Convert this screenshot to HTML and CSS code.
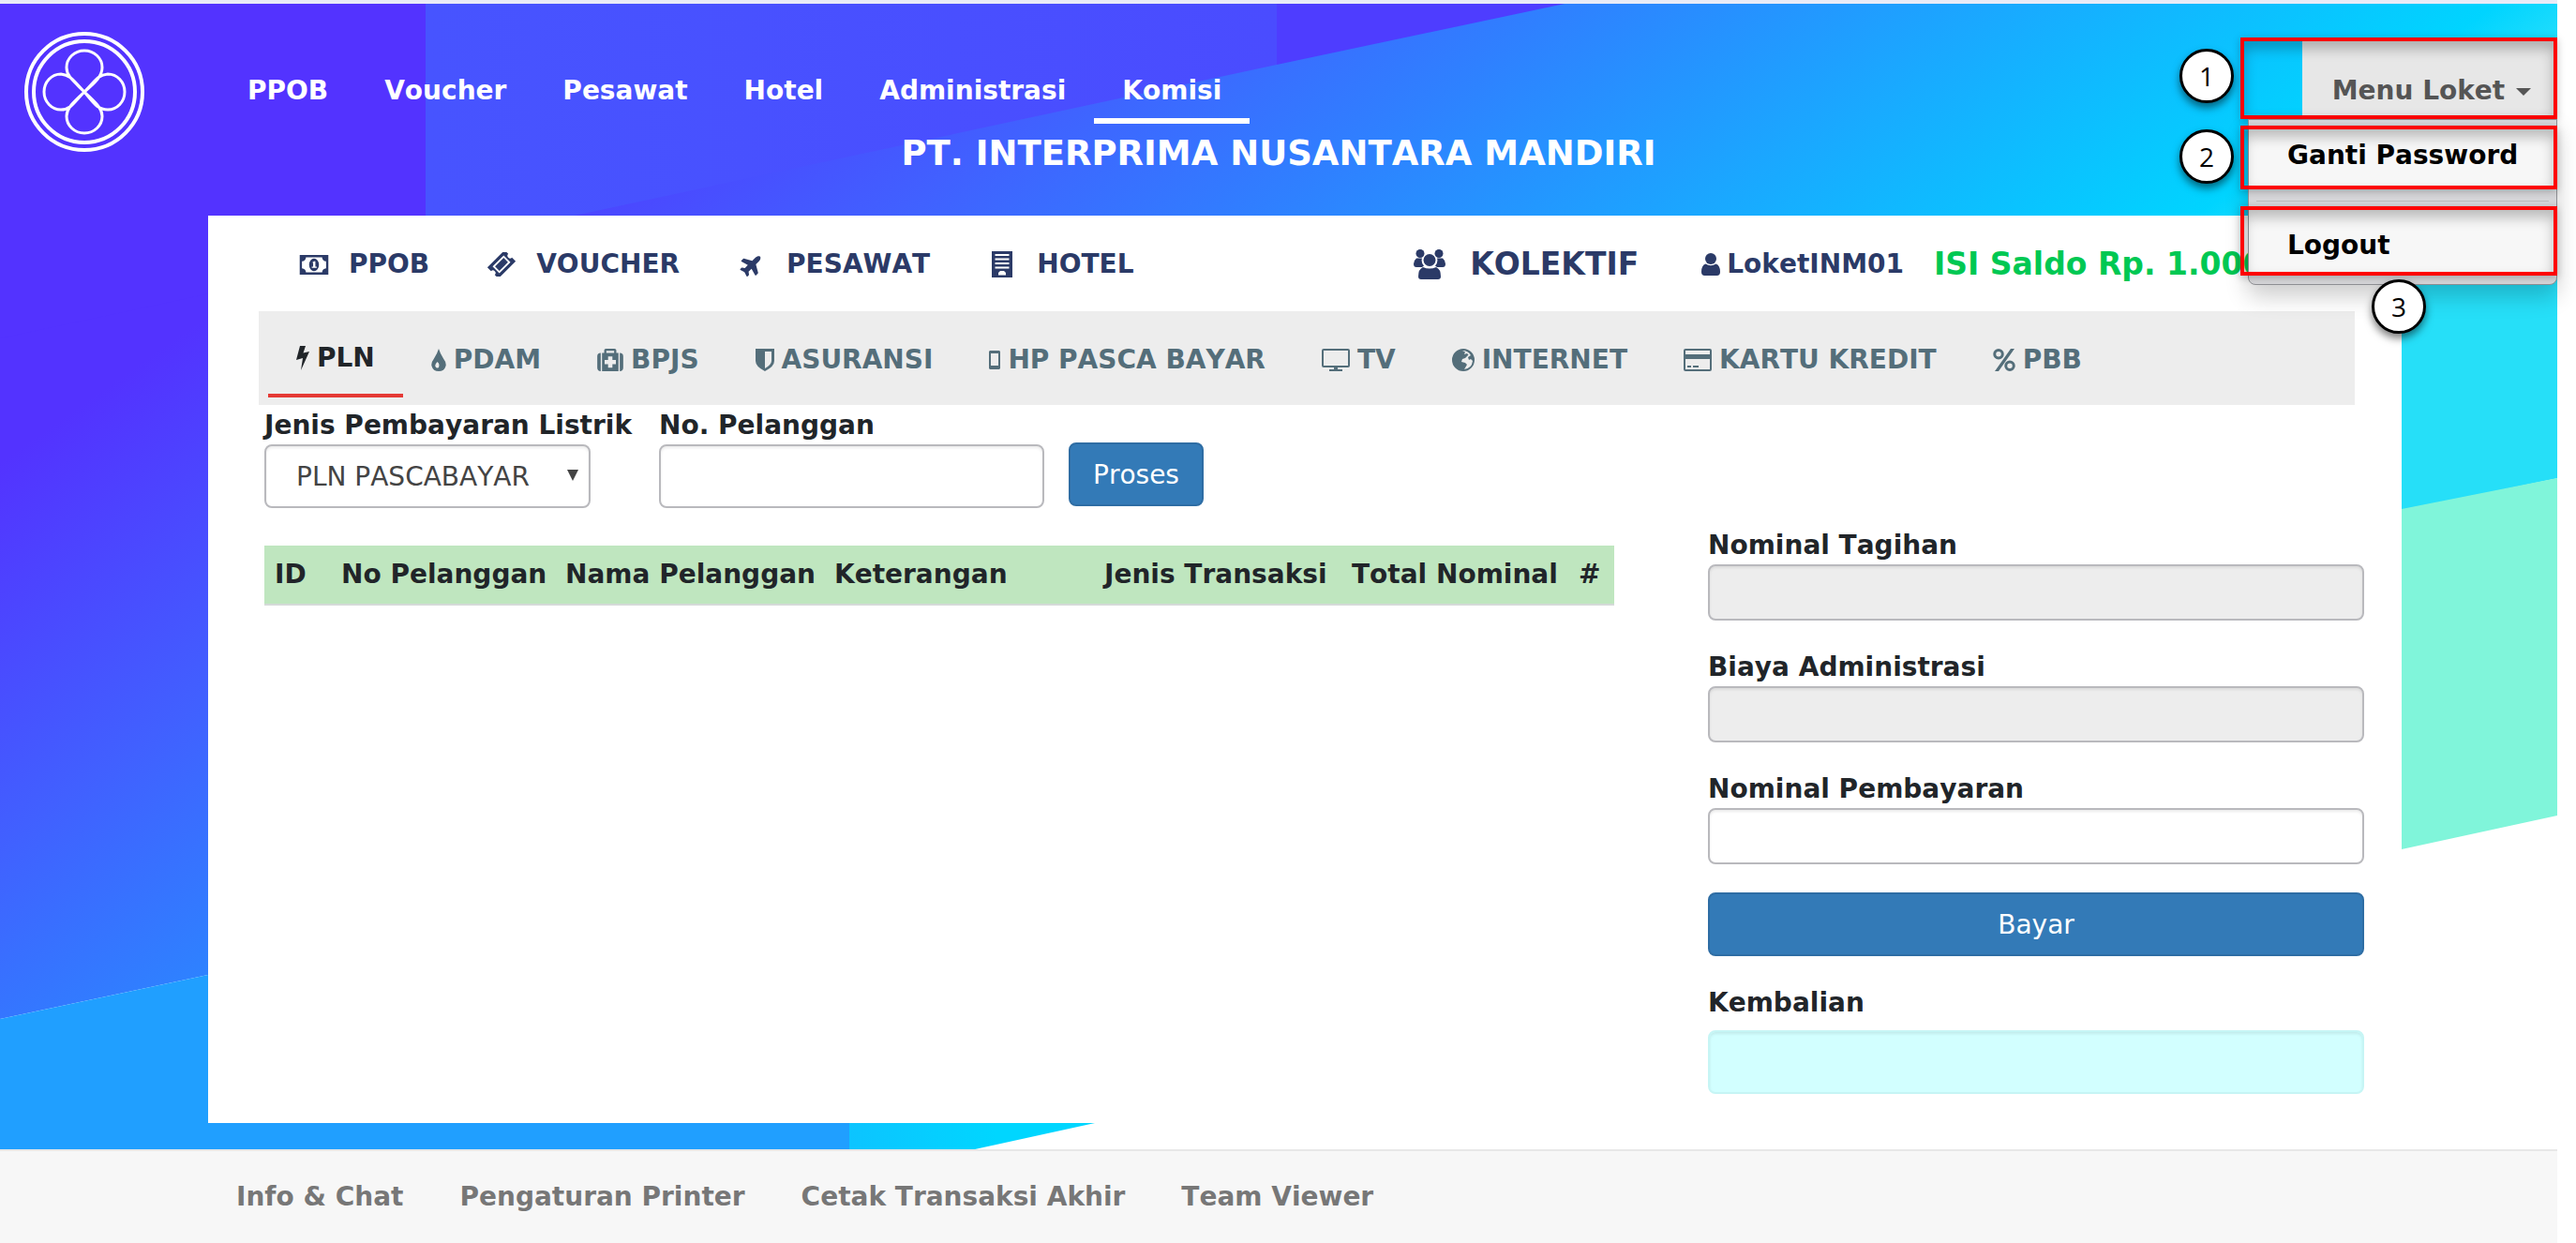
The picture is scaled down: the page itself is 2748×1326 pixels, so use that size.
FILE: index.html
```html
<!DOCTYPE html>
<html lang="id">
<head>
<meta charset="utf-8">
<title>PT. Interprima Nusantara Mandiri</title>
<link rel="stylesheet" href="styles.css">
</head>
<body>
<svg class="sprite" aria-hidden="true">
  <symbol id="i-money" viewBox="0 0 32 22"><path fill-rule="evenodd" d="M0 0h32v22H0zM7 2.500a5 5 0 0 1-4.500 4.500v8a5 5 0 0 1 4.500 4.500h18a5 5 0 0 1 4.500-4.500v-8A5 5 0 0 1 25 2.500zM16 4a5.500 7 0 1 1 0 14a5.500 7 0 0 1 0-14zM14 8.500l2-1.500h1.500v6H19v1.500h-5.500V13H15V9z"/></symbol>
  <symbol id="i-ticket" viewBox="0 0 28 28"><g transform="rotate(-45 14 14)"><path fill-rule="evenodd" d="M0 5h28v6a3 3 0 0 0 0 6v6H0v-6a3 3 0 0 0 0-6zM5 8.500h18v11H5z"/><path d="M7 10.500h14v7H7z"/></g></symbol>
  <symbol id="i-plane" viewBox="0 0 576 576"><path transform="rotate(-45 288 288) translate(0 32)" d="M480 192H365.710L260.610 8.060A16.014 16.014 0 0 0 246.710 0h-65.500c-10.630 0-18.300 10.170-15.380 20.390L214.860 192H112l-43.200-57.600c-3.020-4.030-7.770-6.400-12.800-6.400H16.010C5.600 128-2.040 137.780.49 147.880L32 256 .49 364.120C-2.040 374.220 5.600 384 16.010 384H56c5.040 0 9.780-2.370 12.800-6.400L112 320h102.860l-49.030 171.600c-2.920 10.220 4.750 20.400 15.380 20.400h65.500c5.740 0 11.040-3.080 13.890-8.060L365.710 320H480c35.350 0 96-28.650 96-64s-60.650-64-96-64z"/></symbol>
  <symbol id="i-building" viewBox="0 0 22 28"><path fill-rule="evenodd" d="M0 0h22v28H0zM3.500 3v2h15V3zM3.500 7.500v2h15v-2zM3.500 12v2h15v-2zM3.500 16.500v2h15v-2zM7 25.500h8v-2.500l-2-2H9l-2 2z"/></symbol>
  <symbol id="i-users" viewBox="0 0 34 32"><circle cx="7" cy="4.500" r="4.500"/><circle cx="27" cy="4.500" r="4.500"/><path d="M3 9.500h6a8 8 0 0 0 2 8l-2 1.500H3q-3 0-3-3.500t3-6zM25 9.500h6q3 2.500 3 6t-3 3.500h-6l-2-1.500a8 8 0 0 0 2-8z"/><circle cx="17" cy="11.500" r="6.500"/><path d="M10 19q7 3 14 0q5 2 5 10q0 3-3 3H8q-3 0-3-3q0-8 5-10z"/></symbol>
  <symbol id="i-user" viewBox="0 0 20 24"><circle cx="10" cy="6" r="6"/><path d="M4.500 11.500q5.500 3.500 11 0q4.500 1.500 4.500 8.500q0 4-3.500 4h-13Q0 24 0 20q0-7 4.500-8.500z"/></symbol>
  <symbol id="i-bolt" viewBox="0 0 14 26"><path d="M4 0h6L7.500 7.500 14 6 5 26l2-13-7 2z"/></symbol>
  <symbol id="i-drop" viewBox="0 0 16 24"><path fill-rule="evenodd" d="M8 0q1.500 5 5 10.500q3.500 4.500 2.500 8Q14 24 8 24T.5 18.500q-1-3.500 2.500-8Q6.500 5 8 0zM6.500 14q-3 3-2 5t2.500 1.500t1.500-3T6.500 14z"/></symbol>
  <symbol id="i-medkit" viewBox="0 0 30 26"><path fill-rule="evenodd" d="M8 5V2q0-2 2-2h10q2 0 2 2v3h2.500v21h-19V5zM10.500 5h9V2.500h-9zM12.500 9v4h-4v5h4v4h5v-4h4v-5h-4V9z"/><path d="M4 5v21q-4 0-4-4V9q0-4 4-4zM26 5v21q4 0 4-4V9q0-4-4-4z"/></symbol>
  <symbol id="i-shield" viewBox="0 0 20 24"><path fill-rule="evenodd" d="M0 0h20v13q0 6-10 11Q0 19 0 13zM10 3v18q7-4 7-8V3z"/></symbol>
  <symbol id="i-mobile" viewBox="0 0 12 20"><path fill-rule="evenodd" d="M1 0h10l1 1v18l-1 1H1l-1-1V1zM2 3v13h8V3z"/></symbol>
  <symbol id="i-tv" viewBox="0 0 30 24"><path fill-rule="evenodd" d="M2 0h26q2 0 2 2v16q0 2-2 2H17v2h5v2H8v-2h5v-2H2q-2 0-2-2V2Q0 0 2 0zM2 2v16h26V2z"/></symbol>
  <symbol id="i-globe" viewBox="0 0 24 24"><path fill-rule="evenodd" d="M12 0a12 12 0 1 1 0 24a12 12 0 0 1 0-24zM11 2L14 3.500L13 6L16 5L17.500 6.500L14 10L11 11L10 14L14 15L16 17L13 22Q21 21 22 13L20 11L18 12L17 9L20 7Q17 2 11 2z"/></symbol>
  <symbol id="i-card" viewBox="0 0 30 24"><path fill-rule="evenodd" d="M2 0h26q2 0 2 2v20q0 2-2 2H2q-2 0-2-2V2Q0 0 2 0zM2 2v4h26V2zM2 11v11h26V11zM4 18h4v2H4zM10 18h6v2h-6z"/></symbol>
  <symbol id="i-percent" viewBox="0 0 24 24"><path fill-rule="evenodd" d="M6 0a5.500 5.500 0 1 1 0 11.500A5.500 5.500 0 0 1 6 0zM6 3a2.500 2.500 0 1 0 0 5.500A2.500 2.500 0 0 0 6 3zM18 12.500A5.500 5.500 0 1 1 18 24a5.500 5.500 0 0 1 0-11.500zM18 15.500a2.500 2.500 0 1 0 0 5.500a2.500 2.500 0 0 0 0-5.500zM19 0h4L6 24H2z"/></symbol>
</svg>

<div class="page">
  <svg class="backdrop" viewBox="0 4 2728 1322" preserveAspectRatio="none" aria-hidden="true">
    <defs>
      <linearGradient id="band" gradientUnits="userSpaceOnUse" x1="188" y1="267" x2="922" y2="1309">
        <stop offset=".06" stop-color="#5333ff"/>
        <stop offset=".32" stop-color="#4160ff"/>
        <stop offset=".5" stop-color="#2f80ff"/>
        <stop offset=".71" stop-color="#1aa8ff"/>
        <stop offset=".95" stop-color="#00d4ff"/>
        <stop offset="1" stop-color="#1fdcfc"/>
      </linearGradient>
      <linearGradient id="tip" x1="0" y1="0" x2="1" y2="0">
        <stop offset="0" stop-color="#0cc4ff"/>
        <stop offset=".6" stop-color="#00d6ff"/>
      </linearGradient>
      <linearGradient id="veil" gradientUnits="userSpaceOnUse" x1="454" y1="0" x2="1362" y2="0">
        <stop offset="0" stop-color="#4754ff"/>
        <stop offset="1" stop-color="#4a4cff"/>
      </linearGradient>
    </defs>
    <path fill="url(#band)" d="M0 0H2728V510L0 1087z"/>
    <path fill="#5333ff" d="M0 0H454V264L0 361z"/>
    <path fill="url(#veil)" d="M454 0H1362V69L454 264z"/>
    <path fill="#4e3dff" d="M1362 0H1688L1362 69z"/>
    <path fill="#26dff8" d="M2562 230H2728V510L2562 543z"/>
    <path fill="#209fff" d="M0 1087L906 895V1326H0z"/>
    <path fill="url(#tip)" d="M906 895L1168 840V1198L1040 1226H906z"/>
    <path fill="#80f5da" d="M2562 543L2728 510V870L2562 906z"/>
  </svg>

  <header class="topbar">
    <svg class="logo" viewBox="0 0 128 128" fill="none" stroke="#fff" role="img" aria-label="INM">
      <circle cx="64" cy="64" r="62" stroke-width="4"/>
      <circle cx="64" cy="64" r="54" stroke-width="4"/>
      <path stroke-width="3" d="M64 64C52 52 45 47 45 38a19 18 0 0 1 38 0C83 47 76 54 64 64C52 76 45 81 45 90a19 18 0 0 0 38 0C83 81 76 76 64 64C54 54 50 46 39 45a18 19 0 0 0 0 38C50 83 54 74 64 64C76 52 78 46 89 45a18 19 0 0 1 0 38C78 83 74 76 64 64z"/>
    </svg>
    <nav class="main-nav">
      <a href="#">PPOB</a><a href="#">Voucher</a><a href="#">Pesawat</a><a href="#">Hotel</a><a href="#">Administrasi</a><a href="#" class="current">Komisi</a>
    </nav>
    <div class="account">
      <button class="account-toggle" type="button">Menu Loket <span class="caret"></span></button>
      <span class="mark mark-toggle"></span>
      <span class="step step-1">1</span>
      <div class="account-menu">
        <div class="entry"><a href="#">Ganti Password</a><span class="mark"></span><span class="step step-2">2</span></div>
        <hr>
        <div class="entry"><a class="tall" href="#">Logout</a><span class="mark"></span><span class="step step-3">3</span></div>
      </div>
    </div>
    <h1>PT. INTERPRIMA NUSANTARA MANDIRI</h1>
  </header>

  <main class="card">
    <nav class="services">
      <a href="#"><svg width="34" height="21"><use href="#i-money"/></svg>PPOB</a>
      <a href="#"><svg width="34" height="26"><use href="#i-ticket"/></svg>VOUCHER</a>
      <a href="#"><svg width="34" height="25"><use href="#i-plane"/></svg>PESAWAT</a>
      <a href="#"><svg width="34" height="28"><use href="#i-building"/></svg>HOTEL</a>
      <a href="#" class="collective"><svg width="34" height="32"><use href="#i-users"/></svg>KOLEKTIF</a>
      <a href="#" class="user"><svg width="22" height="24"><use href="#i-user"/></svg>LoketINM01</a>
      <a href="#" class="balance">ISI Saldo Rp. 1.000</a>
    </nav>

    <nav class="tabs">
      <a href="#" class="current"><svg width="14" height="26"><use href="#i-bolt"/></svg>PLN</a>
      <a href="#"><svg width="16" height="24"><use href="#i-drop"/></svg>PDAM</a>
      <a href="#"><svg width="28" height="24"><use href="#i-medkit"/></svg>BPJS</a>
      <a href="#"><svg width="20" height="24"><use href="#i-shield"/></svg>ASURANSI</a>
      <a href="#"><svg width="12" height="20"><use href="#i-mobile"/></svg>HP PASCA BAYAR</a>
      <a href="#"><svg width="30" height="24"><use href="#i-tv"/></svg>TV</a>
      <a href="#"><svg width="24" height="24"><use href="#i-globe"/></svg>INTERNET</a>
      <a href="#"><svg width="30" height="24"><use href="#i-card"/></svg>KARTU KREDIT</a>
      <a href="#"><svg width="24" height="24"><use href="#i-percent"/></svg>PBB</a>
    </nav>

    <div class="workspace">
      <section>
        <form class="lookup">
          <div class="field kind">
            <label for="jenis">Jenis Pembayaran Listrik</label>
            <span class="select"><select id="jenis"><option>PLN PASCABAYAR</option></select></span>
          </div>
          <div class="field customer">
            <label for="pelanggan">No. Pelanggan</label>
            <input id="pelanggan" type="text">
          </div>
          <button class="btn" type="button">Proses</button>
        </form>
        <table>
          <colgroup><col class="c-id"><col class="c-no"><col class="c-name"><col class="c-note"><col class="c-type"><col class="c-total"><col></colgroup>
          <thead><tr><th>ID</th><th>No Pelanggan</th><th>Nama Pelanggan</th><th>Keterangan</th><th>Jenis Transaksi</th><th>Total Nominal</th><th>#</th></tr></thead>
        </table>
      </section>

      <form class="payment">
        <div class="field"><label for="tagihan">Nominal Tagihan</label><input id="tagihan" type="text" disabled></div>
        <div class="field"><label for="biaya">Biaya Administrasi</label><input id="biaya" type="text" disabled></div>
        <div class="field"><label for="bayar">Nominal Pembayaran</label><input id="bayar" type="text"></div>
        <button class="btn" type="button">Bayar</button>
        <div class="field change"><label for="kembalian">Kembalian</label><input id="kembalian" type="text" readonly></div>
      </form>
    </div>
  </main>

  <footer>
    <a href="#">Info &amp; Chat</a><a href="#">Pengaturan Printer</a><a href="#">Cetak Transaksi Akhir</a><a href="#">Team Viewer</a>
  </footer>
</div>
</body>
</html>
```
FILE: styles.css
```css
* { box-sizing: border-box; }

body {
  margin: 0;
  padding-right: 20px;
  background: #fff;
  color: #212529;
  font: bold 28px/36px Verdana, "DejaVu Sans", sans-serif;
}

body, select, button { font-kerning: none; }

a { color: inherit; text-decoration: none; white-space: nowrap; }
svg { flex: none; fill: currentColor; }
.sprite { position: absolute; width: 0; height: 0; }

.page {
  position: relative;
  min-height: 100vh;
  display: flex;
  flex-direction: column;
  border-top: 4px solid #e9ebf7;
}

.backdrop {
  position: absolute;
  inset: 0;
  z-index: -1;
  width: 100%;
  height: 100%;
}

/* Header */
.topbar {
  display: grid;
  grid-template-columns: 234px 1fr auto;
  grid-template-rows: 128px 98px;
  color: #fff;
}
.logo {
  grid-area: 1 / 1 / 3 / 2;
  width: 128px;
  height: 128px;
  margin: 30px 0 0 26px;
  fill: none;
}
.main-nav { display: flex; align-items: flex-end; }
.main-nav a { padding: 0 30px 11px; border-bottom: 6px solid transparent; }
.main-nav .current { border-color: #fff; }
h1 {
  grid-area: 2 / 1 / 3 / 4;
  margin: 10px 0 0;
  font-size: 37px;
  line-height: 44px;
  text-align: center;
}

/* Account menu */
.account { position: relative; align-self: end; display: flex; margin-bottom: 5px; }
.account-toggle {
  height: 87px;
  padding: 26px 28px 0 32px;
  border: 0;
  background: #e7e7e7;
  color: #555;
  font: inherit;
}
.caret {
  display: inline-block;
  margin-left: 2px;
  border: 8px solid transparent;
  border-top-color: #555;
  border-bottom: 0;
  vertical-align: middle;
}
.account-menu {
  position: absolute;
  top: 100%;
  right: 0;
  z-index: 2;
  width: 330px;
  padding: 6px 0 9px;
  border: 1px solid #8f9094;
  border-radius: 0 0 8px 8px;
  background: #d6d6d9;
  box-shadow: 0 12px 24px rgba(0, 0, 0, .2);
  color: #000;
}
.entry { position: relative; }
.entry a { display: block; padding: 14px 41px 18px; background: #f7f7f7; }
.entry .tall { padding: 24px 41px 14px; }
.account-menu hr { height: 1px; margin: 12px 8px 5px; border: 0; background: #bbb; }

/* Numbered callouts */
.mark {
  position: absolute;
  inset: 0 -1px 0 -9px;
  border: 4px solid #f00;
  box-shadow: inset 0 8px 14px rgba(0, 0, 0, .25), 0 2px 8px rgba(0, 0, 0, .25);
  pointer-events: none;
}
.mark-toggle { inset: 0 0 0 -66px; }
.step {
  position: absolute;
  display: grid;
  place-items: center;
  width: 58px;
  height: 58px;
  border: 3px solid #000;
  border-radius: 50%;
  background: #fff;
  box-shadow: 0 5px 8px rgba(0, 0, 0, .5);
  color: #000;
  font: 28px/36px "Open Sans", sans-serif;
}
.step-1 { top: 12px; right: 345px; }
.step-2 { top: 4px; right: 344px; }
.step-3 { top: 78px; right: 139px; }

/* Content card */
.card {
  margin: 0 166px 28px 222px;
  padding: 0 40px 31px 54px;
  background: #fff;
}
.services { display: flex; align-items: center; height: 102px; padding: 2px 123px 0 42px; color: #2b3a67; }
.services a { display: flex; align-items: center; gap: 20px; margin-right: 60px; }
.services .collective { margin-left: auto; margin-right: 66px; gap: 26px; font-size: 33px; }
.services .user { gap: 6px; margin-right: 32px; }
.services .balance { width: 336px; margin-right: 0; color: #00c853; font-size: 33px; }

.tabs { display: flex; height: 100px; margin-right: 10px; padding-left: 10px; background: #ededed; color: #546e7a; }
.tabs a { display: flex; align-items: center; gap: 8px; height: 92px; padding: 16px 30px 0; border-bottom: 4px solid transparent; }
.tabs .current { padding-top: 12px; border-color: #e53935; color: #212529; }

.workspace { display: grid; grid-template-columns: 1440px 1fr; column-gap: 100px; padding-left: 6px; }

/* Forms */
.field { display: flex; flex-direction: column; }
input, select {
  width: 100%;
  border: 2px solid #b9b9bd;
  border-radius: 8px;
  background: #fff;
  box-shadow: inset 0 2px 3px rgba(0, 0, 0, .08);
  color: #444;
  font-size: 28px;
  font-family: Verdana, "DejaVu Sans", sans-serif;
}
input:disabled { background: #ededed; }
.lookup { display: flex; align-items: flex-end; height: 110px; }
.lookup input, select { height: 68px; }
.lookup label { margin-bottom: 2px; white-space: nowrap; }
.kind { width: 348px; margin-right: 73px; }
.customer { width: 411px; margin-right: 26px; }
.select { position: relative; display: block; }
.select::after {
  content: "";
  position: absolute;
  top: 27px;
  right: 13px;
  border: 6px solid transparent;
  border-top: 12px solid #444;
  border-bottom: 0;
}
select { padding: 0 32px; appearance: none; }
.btn {
  height: 68px;
  border: 2px solid #2e6da4;
  border-radius: 8px;
  background: #337ab7;
  color: #fff;
  font-size: 28px;
  font-family: Verdana, "DejaVu Sans", sans-serif;
}
.lookup .btn { width: 144px; margin-bottom: 2px; padding: 0; }

table { width: 100%; margin-top: 40px; table-layout: fixed; border-collapse: collapse; }
thead { background: #bfe6bf; border-bottom: 2px solid #d5dad8; }
th { padding: 13px 0 13px 11px; text-align: left; white-space: nowrap; }
.c-id { width: 71px; }
.c-no { width: 239px; }
.c-name { width: 287px; }
.c-note { width: 288px; }
.c-type { width: 264px; }
.c-total { width: 242px; }

.payment { display: flex; flex-direction: column; padding-top: 132px; }
.payment label { margin-bottom: 2px; }
.payment .field { margin-bottom: 32px; }
.payment .field input { height: 60px; }
.payment .btn { margin-top: -2px; }
.payment .change { margin: 32px 0 0; }
.payment .change label { margin-bottom: 11px; }
.payment .change input { height: 68px; border-color: #c6f5f5; background: #d2ffff; }

footer {
  display: flex;
  align-items: center;
  flex: 1 0 100px;
  padding-left: 222px;
  border-top: 2px solid #e7e7e7;
  background: #f7f7f7;
  color: #777;
}
footer a { padding: 0 30px; }
```
